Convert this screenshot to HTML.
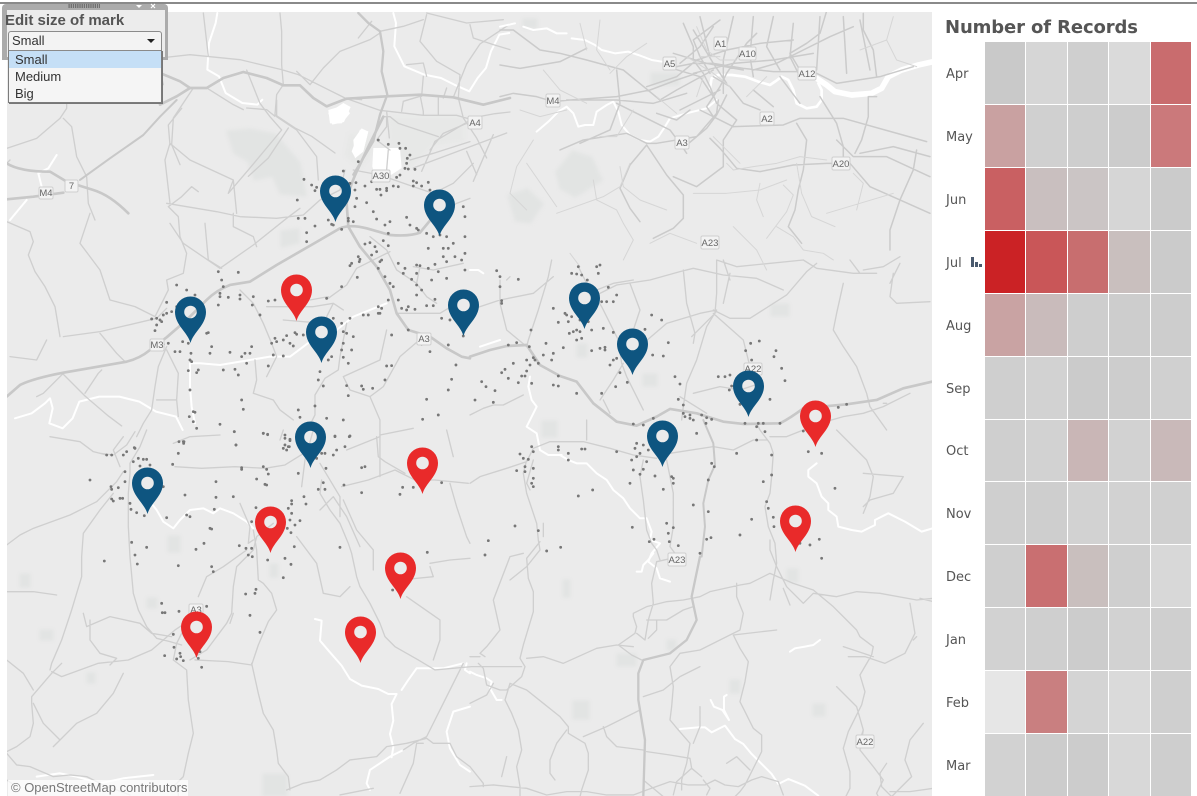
<!DOCTYPE html>
<html><head><meta charset="utf-8"><title>Number of Records</title>
<style>
html,body{margin:0;padding:0;background:#fff;width:1197px;height:796px;overflow:hidden}
#top{position:absolute;left:0;top:2px;width:1197px;height:2px;background:#8a8a8a}
#map{position:absolute;left:7px;top:12px;width:925px;height:784px;overflow:hidden;background:#ebebeb}
#map svg{position:absolute;left:-7px;top:-12px;filter:blur(.35px)}
.sh{fill:#f3f3f3;stroke:#cfcfcf;stroke-width:1}
.st{font:9.5px "Liberation Sans",sans-serif;fill:#666;text-anchor:middle}
#credit{position:absolute;left:8px;top:780px;width:180px;height:16px;background:rgba(255,255,255,.72);color:#777;font:13px/16px "Liberation Sans",sans-serif;padding-left:3px;box-sizing:border-box;white-space:nowrap}
#panel{position:absolute;left:2px;top:4px;width:166px;height:56px;background:#ababab;border-radius:4px 4px 0 0;box-sizing:border-box}
#inner{position:absolute;left:7px;top:10px;width:158px;height:47px;background:#ececec}
#title{position:absolute;left:5px;top:12px;font:bold 15px/17px "Liberation Sans",sans-serif;color:#555;white-space:nowrap}
#grip{position:absolute;left:68px;top:4px;width:32px;height:4px;background-image:radial-gradient(#333 45%,transparent 50%);background-size:2.2px 2px}
#sel{position:absolute;left:8px;top:31px;width:154px;height:20px;box-sizing:border-box;background:#f3f3f3;border:1px solid #8b8b8b;border-radius:3px 3px 0 0;font:13px/18px "Liberation Sans",sans-serif;color:#333;padding-left:3px}
#arr{position:absolute;left:147px;top:39px;width:0;height:0;border-left:4px solid transparent;border-right:4px solid transparent;border-top:4px solid #222}
#drop{position:absolute;left:8px;top:50px;width:154px;height:53px;box-sizing:border-box;background:#f5f5f5;border:1px solid #7c7c7c;border-top:1px solid #8a8a8a;box-shadow:1px 1px 0 #777;font:13px/17px "Liberation Sans",sans-serif;color:#333}
#drop div{height:17px;padding-left:6px}
#drop .on{background:#c5dff6}
h1{position:absolute;left:945px;top:17px;margin:0;font:bold 18px/22px "DejaVu Sans",sans-serif;letter-spacing:-.12px;color:#555;white-space:nowrap}
.m{position:absolute;left:946px;font:13px/16px "DejaVu Sans",sans-serif;color:#555}
</style></head><body>
<div id="top"></div>
<div id="map">
<svg width="1197" height="796" viewBox="0 0 1197 796" fill="none" stroke-linecap="round" stroke-linejoin="round">
<!-- green patches -->
<g fill="#e2e4e3" stroke="#e2e4e3" stroke-width="3" style="filter:blur(1.5px)">
<path d="M228 132l22-2 25 5 24 28 6 32-24-2-8-18-18 4-6-18-14-8zM282 232l16-2 0 12-16 4zM557 172l16-20 18 6 10 22-26 16-14-8zM509 196l18-6 15 14-12 18-14-2zM652 74l26 0 0 10-26 0zM524 20l12 0 0 7-12 0zM543 422l13 0 0 14-13 0zM578 345l8 0 0 11-8 0zM644 375l12 0 0 10-12 0zM772 305l16 0 0 10-16 0zM731 681l8 0 0 11-8 0zM814 705l10 0 0 10-10 0zM574 702l14 0 0 16-14 0zM564 581l5 0 0 15-5 0zM618 655l17 0 0 10-17 0zM668 641l7 0 0 8-7 0zM788 570l9 0 0 11-9 0zM264 775l22 0 0 20-22 0zM271 565l6 0 0 11-6 0zM169 537l10 0 0 14-10 0zM21 575l8 0 0 11-8 0zM41 631l11 0 0 8-11 0zM88 674l6 0 0 8-6 0zM148 599l8 0 0 8-8 0z"/>
<path fill="#e7e8e7" stroke="#e7e8e7" d="M390 118l73 0 0 22-30 4-22 22-20-12zM350 135l16 0 4 18-10 14-14-12z"/>
</g>
<!-- region top left -->
<g transform="translate(160 8) scale(.3333)">
<path fill="#fff" d="M505 315l45-30 22 12-20 45-35 8zM575 430l25-65 25 5-15 60-25 18zM640 420l80 0 5 60-30 20-50 5-8-30z"/>
<g stroke="#fff" stroke-width="6"><path d="M172 15l-5 30-20 60-5 80 35 20 20 50 50 30 45 5 15-15M700 15l8 30-5 70 30 60 60 25 50 10 40 20 45 20 25-40 25-30 15-50 25-50 30-5"/></g>
<g stroke="#cfcfcf" stroke-width="4"><path d="M0 150l90-10 150 15 125 30 50 15 140 70 50 5M370 230l-5-60 0-100-5-55M130 15l15 130M345 320l5-60 20-30M345 320l60 40 50 25 70 50M385 360l-60 90-60 55M100 240l-60 90-5 80 25 60M540 130l-50 50-40 50-40-40M540 130l90-35 30-20M595 90l40-50M660 70l70-15 60-20M780 100l50 60 70 40-5 70 15 60 40 60 30 60M880 268l40-100 40-60 60-40 30-20M800 20l-20 80M800 15l120 30 110-10M930 50l10 40 60 20 50 15M780 260l10 50 0 10M560 272l100 35 130 15 100 0 35 10 80-15 45-5M730 280l-5 30M730 280l50-15M835 270l0 50M860 240l-10 30M680 310l8 80M790 205l-5 60M740 170l50-5 10 40M0 190l10 40M260 300l60 5 25 20M140 240l80 50 30 15M925 340l-100 60-40 90M1040 375l-200 75-80 30M920 430l30 70M1000 380l-60 140"/></g>
</g>
<!-- region 7 -->
<g transform="translate(0 100) scale(.3333)">
<path fill="#fff" d="M985 30l50-15 15 25-25 30-35 0zM1060 120l25-35 20 10-15 60-25 20z"/>
<g stroke="#fff" stroke-width="6"><path d="M170 165l-25 40-30 15 10 40M80 300l-50 60M45 955l50-15 40-30 15-15 8 30-10 45 40 15 30-30 20-50 60-15 60 0 60 15 50 30 60 15 20 40M570 790l30 0 60 5 60-10 90-15 60 0 40-30 20-15 30 0M570 790l0 70 5 60 10 50M1010 690l50-40 50-20 50-20"/></g>
<g stroke="#cfcfcf" stroke-width="4"><path d="M20 145l90-30 70-60 20-30 0-30M190 55l25 25 15 90 30 60 5 80 20 50M20 190l10-10M270 340l-30 90 60 80 30 90 75 20 60 30 40-80-5-30 50-20 10-60-20-50-5-60-30-30 40-30 30-30 20 15M500 310l150 25 70 15 110 5 80-10 50-45 60-30 15-60M510 310l-15-130 15-50 60 50 130 60-15 40 60-70 100-120 -35-40-30-40-40-100M510 135l-5-60 40-50M830 50l0 -50M830 50l60 40 60 80 5 70M700 240l10 100M615 370l10 110 40 25M700 340l0 40 60 30 10 30M510 370l40 60 110 75 100-70 100-80 40-30M20 365l70 30 10 30-15 40 20 50 30 45 30 60 15 90M190 710l110-15 170-40 30-30M300 700l50 60 25 25M140 720l-30 60-80-10M185 818l70 70 70 60 40 30M190 820l-60 60-20 10M255 880l40-60 10-10M500 740l-25 60-10 60 -10 70-25 40-20 40M500 750l35 70-5 80 5 50M470 900l60 0M720 570l40 40 30 60 25 60 15 40 -30 60M765 780l5 60-10 40 60 20 20 30 40 30M1030 630l-30-20-30 60-120-10M930 600l55-10M985 595l55-40 30-50 100-50M1040 670l-20 100-5 40-40 25-30 50 0 60-20 40M1000 610l-60 10-60 0-80 0M1160 690l-20 90-110 50 20 40 60 20 30 70 0 70 0 100M1270 710l-70 60-50 90-40 30M1060 210l80 15 100 35 60 20 60-30 60-60M1150 50l20 0 25 20 120 40M1160 50l0 30-30 40 40 30M1165 150l-5 60M1230 180l70-20 110-35M1290 150l40-50 70-30M1300 350l70-40 40-15M1240 500l60 10 90-20M1190 640l130 0 50-30M1110 410l50 40 30 60 60 40M1260 500l-10 50 30 40 30 20"/>
</g>
</g>
<!-- region 9 -->
<g transform="translate(0 430) scale(.3333)">
<g stroke="#fff" stroke-width="6"><path d="M450 215l20 25 20 35 30 20 20-25 30-30 40-5 30 15 20-15 40 15 40 25 20 20M945 567l20 5 -5 60 30 35 35 40 25 40 35 20 50 10 30 15 25 0 -15 30 5 50 -10 40 10 40 -5 30M1210 960l-40 20-30 20-30 20-10 40 10 20M1205 780l20-30 25-35 80 0 60-15M1400 700l-5 20 15 10M1410 830l-50 15-20 60 10 50 30 50 30 20M110 1040l70-10 50 10 70 20 70-15 90-10"/></g>
<g stroke="#cfcfcf" stroke-width="4"><path d="M20 345l40-30 40-20 110-40 80-40 60-60 20-30M340 190l-40 50-50 70-5 70 0 60-30 100-30 90-30 70-5 20M155 725l30 15 110-40 90-10 70-30 70-60 30-20M545 610l-15 30-10 50 40 30 5 90 15 100-15 60-15 70-30 30 15 20 0 60-10 60M595 500l25-60 50-30 70-50M760 360l-50 50-10 60-5 80-15 30-60 80-50 30M700 550l-10 30M585 690l100 5 70 10 20-60 30-70 25-35-15-50-25-30-15-10-5-90-10-60M755 700l20 90 15 60 30 50 10 60 5 40 30 40 5 40M760 360l10-40 50-40M760 330l-15 10 5-50 -30-70M940 0l-25 90-10 80M965 150l-5 40 30 50 30 40 25 60 10 30 15 70 10 30 30 50 30 60 15 40 30 30 70 40 50 30 110-10 150 0M1390 700l-60 120-50 100-40 20-30 20M860 1080l50-20 50-10 50-30 40-30 80-10 30-30 60-10 60-15 20 15 50 0 20 40 40 30 40 50 0 10M1270 940l-20 0-10 60 -40 90M1020 1095l100-20M520 40l50-20 90-5M390 100l0 30-5 60 0 100 5 90 10 110 15 50 25 50 30 35 40 10 35 10M360 110l-20-50 30-40M440 0l-20 50-30 50M300 70l40 5 40-30 25-40M150 20l90 15 40 30 40 10M525 110l80 5 100-5 90 5 60-10 40-25 40-25 40-40M960 100l60 100 0 60M1025 170l80-20 80-30 60 30 60 0 100 10M1130 20l5 60 20 15 60 35M840 30l10-30M1140 15l100-20M1040 60l100-40M20 1050l30 20M20 965l30-15 40-30 10-40 -5-60 0-20 60-70 30-30M20 970l30 35 40 5 70 30 50-5 50 5 60 30 30 10 40 15M100 820l30 60 50 50-20 20M180 930l50-50 60-30 50-60 30-60M250 550l10 40 70-30 90 20 35 30 60 10M270 570l0 60 30 40 50 15 -20 20M20 690l50 40 30 50M20 485l80 0 70 10M960 240l40-40 40 60 40 90M1030 210l40 90 50 60 0 60M890 320l60 80 20 90 50 10 30-30M1290 400l60-10 60-5M1200 450l100-10 -10-30M1220 500l100 70 0 60-20 60M1340 0l20 80M1350 160l20 70 30 90 10 20"/>
</g>
</g>
<!-- region 8 -->
<g transform="translate(470 260) scale(.3333)">
<g stroke="#fff" stroke-width="6"><path d="M0 30l25 0 15 10M30 260l30-10 30-10M180 350l-5 30 10 40 15 20-15 30 -15 30 30 20 10 50 25 15 40 0M270 585l25 15 25 10 30 0 30 30 30 20 20 30 30 25 20 30 30 30 20 0 15 40 -5 25 30 10-25 30-10 25 25 20 10 30 30 10M1040 610l-25 20 0 20 25 20 15 40 20 20 0 20 25 20 5 30 40 10 30 5 40-20 0-15 40-20 50 25 50 30 50-15 30 0 5-30"/></g>
<g stroke="#cfcfcf" stroke-width="4"><path d="M245 0l-10 50-30 100-30 90-5 20M90 60l0 70 20 80 60 50M0 150l90-30 100-20 60-50M0 465l40-20 30-10 30 0 60-30M0 670l30-20 80-25 60-20 20-40 50-20 100 0 80 20 70 20 70 10M170 600l-10 40 10 60 30 90 5 50 5 30 -40 50-50 40M190 600l-20 70 10 20M520 450l-50-100-15-40-10-70-50-100-40-60-30-60M520 600l-10 50 10 70 10 90 15 40 15 20 10 30M590 600l20 100 0 100-10 60 30 40M460 310l-30 50-40 60M520 250l70-60 100-30 50-10 -30 50-30 100-30 70-10 70-5 40M640 30l10 100 25 90 -5 30M740 0l0 100-5 60 -70 70M730 160l90 80 20 80M730 150l50 25 60 0 110-70 60-70 30-25M740 0l60 20 200-20 40 25 110 15 70 0M630 35l-90 25-100 15-60 30-20 0M630 35l40-10 90 20 100 10 80 35M380 90l50-20 60-10M780 60l-20-60M480 70l30 80 -20 60M760 130l20-90M860 490l10 20 30 40 10 30 -5 70 -5 50-15 40 10 60 20 50 5 60 -10 50 -10 60M600 580l130-20 60 10 60-30 40 0M900 530l50 0 50-20 50-20 70-20 60-10 60-20 80-40M1250 430l-10 0M1120 70l-20 90-10 50 30 50 40 60 30 80 10 40 50 70M1140 0l30 40M1270 40l-10 70 20 20 100-5M1180 30l60-10 50-30M1290 10l-30 60M630 410l80 50M670 400l80-20 60 10 60-20M400 420l20 40M1100 510l90 90 20 50 -10 60 -20 50M1180 640l120 10 -30 50 -70 20 -20 20M350 540l0-60 0 40M220 790l0 40M120 50l-10 10"/></g>
</g>
<!-- region 10 -->
<g transform="translate(470 540) scale(.3333)">
<g stroke="#fff" stroke-width="6"><path d="M500 95l15 0 5-20 15-15 15-20M960 335l15-10 30-5 25-5 20-15M722 480l10 20 25 10 20 30-15-30 0-40 8-5M630 567l55-5 20 0 20 15 40-20 30 40 25 15 25 30 30 30 30 30 20 30 30-15 50 20 40 30 10 30 60-15M0 395l20 10 30 10 15 10 -5 20 20 35 15 0"/></g>
<g stroke="#cfcfcf" stroke-width="4"><path d="M210 5l-40 50 5 60 15 40 0 60-30 100-10 40 15 25-10 30-45 40-20 0-40-15-10-50-15-15M170 355l50-5 60 20 100-45 60-10 50 5M445 315l50-35 5-20-10-30 0-10 40-20 60-15 50-5 50-10 30-15 90-20 30-5 60-30 70 30 60 20 60 50 40 40 30 30 10 20 40 30-5 25-35 60 15 50-10 40-40 80-15 50 20 70 0 50-25 50-10 30M500 280l25 20 10-60 15-50-5-60 15-65 45-10M530 240l30 0 0 30-25 25M560 240l30 0 50-30 30-10M445 315l40 30 30 15M1000 190l30-30 70 10 60-15 70 5 110 20 50-5M1000 190l-50-50-30-60-20-50 0-30M940 145l20 50M120 430l50 20 50 40 50 40 25 30 0 20 50 30 10 30 0 50-20 60-10 40-5 30M120 430l-15 50 20 40 20 50 10 60-15 50 10 60 0 30M0 490l50-25 20-35M45 350l-15-10 20-20 40-50-20-90 50-130 40-10M0 350l30 0M0 740l70-5 100 10 60 20 60-10 60 0 60 10 80 0 40-15 70-25 55 10 50 0 30-15 30 15 40 5 40-20 30-10 50 15 15 40M700 720l20 25-10 20M520 720l60 50M660 655l-60-10-70-10M660 655l5 30 30 25M665 685l-45 40-10 40M800 130l0 40 20 50 -10 50 -120 60 -60 10 -30 40 10 60 -5 60 -5 40 25 30 35 40 -10 60 -15 50 0 30M920 270l-130 15 20 40 25 40 -10 60 -15 60 20 40 20 40 25 20 0 50-30 60 -20 40 -15 20-30 30-20 60M690 380l-60 30-50 40-60 20M1100 440l60 60 20 70-10 60 40 50 30 40-20 40 15 30 20 10M1180 570l-10 30M1360 550l-40 50-15 60 20 50-30 30-30 30-30-30-5-40 20-30M1390 745l-70 10-60 0M1390 185l-40-10M1320 190l15 90-30 60-60 30-60-20-50 0M1120 320l90 30M1340 290l-10 10M400 560l10 30 30 30 80 10M510 510l-100 50-70 30M290 570l-30 40-20 50 0 40 15 20M110 650l-15 60M690 500l0 60-20 50M770 670l30-20 40 40"/></g>
</g>
<!-- region 6 -->
<g transform="translate(500 10) scale(.3333)">
<g stroke="#fff" stroke-width="6"><path d="M0 50l45-10M70 50l30 10 40-5 30 15 30 0M215 85l40 5 30 15 20 15 40 10 40-5 30 10 40 15 30 5"/><path d="M110 365l35-30 30-30 25-15 20 20 15 40 20-5 25 0 10-40 30-20 20-10 15 30 10 40 25 30 30 15 30 5 25-15 20-30 15-25 50-15 60-15 30-25"/><path stroke-width="8" d="M630 235l5-30 20-10 40 0 40 5 40 15 35 10 15-10 20-15 20 10 15 30 10 40 30 15 30-5 15-20 0-30-10-20"/><path stroke-width="17" d="M950 205l30 20 25 20 50 10 60-5 30-15 20-35 40-20 50-15 45-10"/></g>
<g stroke="#cbcbcb" stroke-width="4.5"><path d="M0 60l40 0 80 60 60 10 80 20 110 30M0 165l60 10 120-20 80-40M370 180l110 90 50-30 110-60M530 170l50-10 60 0 90 15 90 10 80 0M0 260l40-10 70 10 50 15 50-5 140-10 100-20 80-30 60-20M200 270l150 0 110 10 100-30M350 180l10 100 -30 80-90 40M350 280l120 60 40 20 30 40 20 30M180 420l70-30 130-20 60 30 30 0 120-20 60-70 5-40M440 405l-50 60-30 70 30 60 30 40M440 405l60 90 50 60 0 70-30 30 -60 30M520 500l70 30 80-60 0-80 40-60-60-50-20-50-20-40 -30-40 0-40-30-70M660 30l-80 60 20 50 30 50M700 350l-60-30-20-30 40-60 20-40 60-90 30-30M680 255l-30 60-30 40-60 50M700 350l150 -5 50-20 130 0 250 70 M890 340l30 50 -10 90 -15 60-10 60-20 50 40 50M1240 170l-100 30 -130 20-60-30-50-10 -30-50 50-30 40-30 30-100M760 180l70-20 80-40 80-40 70-30M1130 200l-10-80-30-60 0-50M960 260l50 80 20 70 0 50 -20 0 -30 0 -100 5-100 20-70-10-50-60-30-30M1010 390l50 50 100 0 130 60M1080 430l100-20 110 30M1050 460l60 70 90 40 90 40M1200 570l-30 90 0 60M1200 570l40-90 10-60M1130 260l-25 0 0 60 -20 70 -20 40M500 170l100 30 40 60M540 160l60-50 40-60M580 60l60 100 40 60M600 20l30 120M700 20l-30 130 0 100M760 20l-10 120 10 60M820 20l-20 90 40 70M880 40l-10 100 30 60M960 20l-10 160M1030 20l10 170M1080 30l30 150M580 190l120 -30 120 -10 120 -20M440 230l90-30 60-50 90-30 100-20 100-10M520 130l100 30 110 20M640 200l50 30 40 50 50 20M660 240l-60 30-60 30M600 300l60 30M760 240l60 50M840 200l60 80M470 310l60 20 40-30"/></g>
<g stroke="#d6d6d6" stroke-width="3"><path d="M600 140l60 0M590 50l30 70 40 30 50 0M560 140l80 50 50 40M610 200l-20 60M470 260l60 50M440 100l-60 40-50 50M800 200l-60 60M100 390l-50 80 -20 80 50 50M300 380l50 0 50-80M80 460l90 130M170 610l140-50 50-30 30-70M280 510l10 60 60 30 20 40 30 50 -30 60M360 470l10 60 50 40 80 30M580 550l100 0 100-10 80-30M680 460l20 20 60-10 70-10 70-20 80 10M780 520l-10 50 20 50M850 525l30 30 -20 50 -60 80M890 460l15 90 30 70 70 30M980 610l100-30 100-30M1060 490l30 30 -20 80M700 650l70 70 30 60M450 700l60-30 80 30M830 650l50 30 30 40 60 10 30 20M210 730l30 40M640 380l50 50 30 30M1180 20l-20 70 30 60 60 20M1160 90l-80 30M240 40l20 80M300 30l-10 90 40 60M130 180l50 60 80 40M60 300l60 20 80-20"/></g>
</g>
<!-- major roads -->
<g stroke="#c8c8c8" stroke-width="2.4">
<g transform="translate(160 8) scale(.3333)" stroke-width="8"><path d="M0 195l60 25 30 20 50 0 50-30 60-18 70 18 50 22 50 0 40 38 40 25 60-23 120-7 100-5 100 8 90 22 80-20M0 290l50-25 40-25"/><path stroke-width="7" d="M595 15l30 30 35 25 10 60-5 60 17 70-22 60-20 80-30 50-30 50"/></g>
<g transform="translate(0 100) scale(.3333)" stroke-width="8"><path d="M20 890l40-35q40-20 130-37l190-33q40-10 70-35l50-38 60-52 60-60q30-30 70-45l60-10 80-50 130-75 60-35q30-13 80 0l70 20q60 5 90-7l40-48"/><path d="M20 298l80-8 90-12M20 190q40 25 130 25l50 30 80 25q50 15 105 70"/><path stroke-width="6" d="M240 240l90-65 100-70 50-55 50-50"/><path d="M1040 310l5 70 35 60 50 60 40 70 20 70 35 50 65 20 50 35 45 25 25 5M1040 310q5-40 30-95l40-85 40-80"/></g>
<g transform="translate(470 260) scale(.3333)" stroke-width="8"><path d="M0 290l60-20 50-12 60-3 40 60 60 33 50 17 50 65 70 55 60 12 60-27 40-23 80 13 80 25 60 7 110-2q30-15 70-45l130-12 90-13 80-35 86-20"/><path stroke-width="6" d="M700 480l30 70 5 65-20 45-15 70 5 70-10 90"/></g>
<g transform="translate(470 540) scale(.3333)" stroke-width="7"><path d="M690 50l-25 120 15 70-30 60-50 40-80 20-15 40 0 80 20 120-5 168"/></g>
</g>
<!-- dots -->
<g stroke="#777">
<g transform="translate(0 100) scale(.3333)" stroke-width="8.5"><path d="M1135 120h0M1165 133h0M1197 130h0M1200 145h0M1217 145h0M1230 165h0M1222 175h0M1220 190h0M1215 205h0M1225 207h0M1245 208h0M1200 225h0M1190 232h0M1240 243h0M1250 248h0M1285 247h0M1265 258h0M1240 258h0M1290 270h0M1195 260h0M1180 258h0M1160 265h0M1160 272h0M1130 268h0M1140 268h0M1143 285h0M1120 232h0M1125 240h0M1115 245h0M1075 185h0M1030 213h0M912 238h0M935 255h0M950 262h0M945 272h0M892 300h0M1068 248h0M1050 250h0M1095 258h0M1065 270h0M1070 295h0M1100 308h0M1120 335h0M1065 320h0M1045 355h0M1045 363h0M1060 365h0M1130 357h0M1155 375h0M1170 365h0M1165 400h0M1230 375h0M1250 385h0M1255 390h0M1220 352h0M1280 400h0M1300 410h0M1320 405h0M1340 410h0M1395 350h0M1390 320h0M1025 388h0M1000 375h0M995 373h0M985 360h0M945 378h0M915 355h0M895 355h0M920 398h0M920 425h0M1095 432h0M1110 428h0M1125 440h0M1150 422h0M1165 437h0M1130 455h0M1115 465h0M1140 485h0M1145 480h0M1075 470h0M1080 478h0M1078 485h0M1055 490h0M1050 497h0M1135 505h0M1155 530h0M1170 550h0M1180 560h0M1195 490h0M1215 505h0M1210 520h0M1250 495h0M1260 497h0M1285 505h0M1305 493h0M1315 515h0M1340 485h0M1365 470h0M1385 480h0M1395 510h0M1345 445h0M1360 430h0M1395 410h0M1395 460h0M1330 445h0M1285 445h0M1330 470h0M1250 520h0M1235 538h0M1250 555h0M1295 540h0M1340 535h0M1265 570h0M1250 585h0M1225 620h0M1205 625h0M1220 630h0M1165 600h0M1135 620h0M1145 625h0M1135 640h0M1140 640h0M1195 600h0M1245 628h0M1280 617h0M1300 617h0M1305 598h0M1325 655h0M1350 660h0M1225 690h0M1265 733h0M1290 755h0M1345 735h0M1390 708h0M1175 705h0M1105 645h0M1090 645h0M1050 655h0M1025 670h0M1000 655h0M1030 695h0M1040 700h0M1060 710h0M1030 730h0M1025 750h0M1055 750h0M1030 772h0M1045 790h0M995 770h0M985 780h0M960 815h0M955 840h0M970 858h0M1040 857h0M1085 858h0M1090 868h0M1118 865h0M1045 887h0M1155 840h0M1175 797h0M1160 798h0M1280 898h0M1315 945h0M1268 958h0M1368 795h0M1355 838h0M1345 870h0M945 918h0M900 952h0M895 930h0M1030 960h0M980 955h0M1005 1010h0M1050 1008h0M790 1000h0M803 1003h0M703 995h0M708 1035h0M855 1015h0M870 1022h0M855 1035h0M865 1040h0M730 928h0M725 900h0M660 973h0M590 985h0M580 965h0M568 950h0M580 935h0M585 937h0M552 1025h0M403 1043h0M570 870h0M595 810h0M590 818h0M565 812h0M570 780h0M573 760h0M575 785h0M565 730h0M540 755h0M525 755h0M505 730h0M490 733h0M548 725h0M555 690h0M625 698h0M620 700h0M635 740h0M630 760h0M690 757h0M725 770h0M735 760h0M740 790h0M750 760h0M755 740h0M705 808h0M715 825h0M670 810h0M805 798h0M825 715h0M830 725h0M815 730h0M820 765h0M850 768h0M860 707h0M885 698h0M890 703h0M870 730h0M880 738h0M910 705h0M850 720h0M665 540h0M670 560h0M655 515h0M715 517h0M660 580h0M660 590h0M685 592h0M720 585h0M720 597h0M760 590h0M757 615h0M655 615h0M805 603h0M825 600h0M780 645h0M530 555h0M560 570h0M585 585h0M530 620h0M500 607h0M515 635h0M500 640h0M490 645h0M470 655h0M455 657h0M485 665h0M470 675h0M465 692h0M480 660h0M980 595h0M925 595h0M1025 560h0M1072 532h0"/></g>
<g transform="translate(470 260) scale(.3333)" stroke-width="8.5"><path d="M80 32h0M90 50h0M90 80h0M145 58h0M95 122h0M95 130h0M305 40h0M320 42h0M335 45h0M325 20h0M380 20h0M390 15h0M385 40h0M352 60h0M415 82h0M440 105h0M430 125h0M395 125h0M410 125h0M250 145h0M285 160h0M290 165h0M305 170h0M265 187h0M295 185h0M330 180h0M355 185h0M320 210h0M310 215h0M298 220h0M330 215h0M365 210h0M335 235h0M320 240h0M400 205h0M430 217h0M228 250h0M183 210h0M178 260h0M115 255h0M140 248h0M280 263h0M365 272h0M390 265h0M405 262h0M405 270h0M250 280h0M245 300h0M220 285h0M190 293h0M195 300h0M170 300h0M205 310h0M180 315h0M170 333h0M155 348h0M165 348h0M130 310h0M105 328h0M95 338h0M115 355h0M145 368h0M185 370h0M35 365h0M48 380h0M75 392h0M15 420h0M70 427h0M265 348h0M250 375h0M265 378h0M320 400h0M395 400h0M430 300h0M420 315h0M440 295h0M450 338h0M472 367h0M437 380h0M545 165h0M575 180h0M525 208h0M595 248h0M548 285h0M580 288h0M615 350h0M630 372h0M625 418h0M640 435h0M640 460h0M660 465h0M660 475h0M670 480h0M645 470h0M695 465h0M710 473h0M725 478h0M708 490h0M680 520h0M490 492h0M520 495h0M550 475h0M585 568h0M500 550h0M495 565h0M520 555h0M535 570h0M510 580h0M500 590h0M530 605h0M485 600h0M490 630h0M520 628h0M510 643h0M555 648h0M605 650h0M610 655h0M610 670h0M580 688h0M480 670h0M440 575h0M345 567h0M335 567h0M295 580h0M295 600h0M265 560h0M265 570h0M185 560h0M190 575h0M150 582h0M160 595h0M175 598h0M165 620h0M165 635h0M190 625h0M190 655h0M185 670h0M140 632h0M190 680h0M325 708h0M368 690h0M135 798h0M205 812h0M55 842h0M45 885h0M230 873h0M272 862h0M487 802h0M590 790h0M610 803h0M595 820h0M598 845h0M625 857h0M552 838h0M538 845h0M670 735h0M715 755h0M710 838h0M723 833h0M690 880h0M725 610h0M733 620h0M715 660h0M745 350h0M765 350h0M780 345h0M785 378h0M778 390h0M810 433h0M825 490h0M865 490h0M860 500h0M885 515h0M860 540h0M800 580h0M905 585h0M905 645h0M880 665h0M890 725h0M895 745h0M910 772h0M912 800h0M845 778h0M810 825h0M930 490h0M1000 513h0M1015 575h0M1055 580h0M1095 685h0M880 490h0M900 418h0M945 362h0M935 325h0M912 290h0M918 272h0M868 243h0M842 250h0M827 272h0M845 300h0M990 850h0M1020 855h0M1048 838h0M1055 895h0M1105 442h0M1130 433h0"/></g>
<g transform="translate(0 430) scale(.3333)" stroke-width="8.5"><path d="M320 75h0M335 75h0M370 75h0M380 65h0M405 55h0M415 85h0M430 88h0M440 88h0M400 95h0M420 108h0M450 105h0M375 125h0M375 155h0M355 173h0M333 170h0M335 178h0M335 207h0M340 213h0M360 205h0M368 205h0M270 150h0M390 220h0M393 238h0M410 248h0M433 257h0M500 263h0M490 170h0M555 195h0M648 155h0M648 202h0M700 200h0M643 238h0M560 255h0M570 260h0M630 295h0M635 297h0M612 340h0M588 358h0M440 352h0M395 337h0M405 375h0M412 402h0M313 393h0M535 407h0M635 410h0M640 425h0M718 347h0M738 355h0M755 355h0M745 375h0M757 380h0M803 390h0M855 385h0M873 403h0M850 443h0M883 350h0M873 308h0M862 295h0M885 285h0M900 272h0M870 270h0M875 250h0M865 235h0M875 212h0M875 222h0M918 222h0M912 200h0M895 130h0M805 132h0M795 163h0M800 165h0M770 147h0M768 233h0M755 275h0M725 113h0M725 118h0M800 118h0M790 110h0M535 70h0M518 103h0M537 35h0M550 35h0M551 40h0M485 520h0M495 548h0M487 548h0M537 544h0M620 529h0M520 613h0M522 652h0M540 670h0M542 680h0M530 687h0M550 692h0M494 677h0M595 685h0M605 712h0M600 665h0M768 478h0M765 490h0M737 492h0M750 556h0M780 607h0M1020 352h0M975 178h0M955 178h0M970 158h0M1032 165h0M1085 188h0M1085 113h0M1095 110h0M978 115h0M1010 60h0M1000 75h0M1035 50h0M1048 20h0M1005 18h0M965 70h0M950 85h0M975 70h0M855 15h0M870 28h0M850 55h0M860 60h0M868 50h0M703 5h0M708 45h0M790 10h0M803 14h0M1325 158h0M1240 172h0M1208 172h0M1200 193h0M1282 367h0M1178 480h0M1180 460h0M1105 650h0"/></g>
</g>
<!-- shields -->
<g>
<rect class="sh" x="714" y="37" width="13" height="13" rx="1.5"/><text class="st" x="720.5" y="47">A1</text>
<rect class="sh" x="739" y="47" width="17" height="13" rx="1.5"/><text class="st" x="747.5" y="57">A10</text>
<rect class="sh" x="663" y="57" width="13" height="13" rx="1.5"/><text class="st" x="669.5" y="67">A5</text>
<rect class="sh" x="798" y="67" width="18" height="13" rx="1.5"/><text class="st" x="807" y="77">A12</text>
<rect class="sh" x="546" y="94" width="14" height="13" rx="1.5"/><text class="st" x="553" y="104">M4</text>
<rect class="sh" x="468" y="116" width="14" height="13" rx="1.5"/><text class="st" x="475" y="126">A4</text>
<rect class="sh" x="760" y="112" width="14" height="13" rx="1.5"/><text class="st" x="767" y="122">A2</text>
<rect class="sh" x="675" y="136" width="14" height="13" rx="1.5"/><text class="st" x="682" y="146">A3</text>
<rect class="sh" x="832" y="157" width="18" height="13" rx="1.5"/><text class="st" x="841" y="167">A20</text>
<rect class="sh" x="701" y="236" width="18" height="13" rx="1.5"/><text class="st" x="710" y="246">A23</text>
<rect class="sh" x="39" y="187" width="14" height="12" rx="1.5"/><text class="st" x="46" y="196">M4</text>
<rect class="sh" x="65" y="180" width="13" height="12" rx="1.5"/><text class="st" x="71.5" y="189">7</text>
<rect class="sh" x="372" y="170" width="18" height="12" rx="1.5"/><text class="st" x="381" y="179">A30</text>
<rect class="sh" x="417" y="333" width="14" height="12" rx="1.5"/><text class="st" x="424" y="342">A3</text>
<rect class="sh" x="150" y="339" width="14" height="12" rx="1.5"/><text class="st" x="157" y="348">M3</text>
<rect class="sh" x="744" y="363" width="18" height="12" rx="1.5"/><text class="st" x="753" y="372">A22</text>
<rect class="sh" x="668" y="553" width="18" height="13" rx="1.5"/><text class="st" x="677" y="563">A23</text>
<rect class="sh" x="189" y="604" width="14" height="12" rx="1.5"/><text class="st" x="196" y="613">A3</text>
<rect class="sh" x="856" y="735" width="18" height="13" rx="1.5"/><text class="st" x="865" y="745">A22</text>
</g>
<!-- pins -->
<defs><path id="p" fill-rule="evenodd" stroke="none" d="M0 0C-3-11-15.5-18-15.5-31A15.5 15.5 0 1 1 15.5-31C15.5-18 3-11 0 0ZM-6.3-31A6.3 6.3 0 1 0 6.3-31A6.3 6.3 0 1 0-6.3-31Z"/></defs>
<g fill="#0e5580">
<use href="#p" x="335.5" y="222"/><use href="#p" x="439.5" y="236"/><use href="#p" x="190.5" y="343"/><use href="#p" x="321.5" y="363"/><use href="#p" x="463.5" y="336"/><use href="#p" x="584.5" y="329"/><use href="#p" x="632.5" y="375"/><use href="#p" x="748.5" y="417"/><use href="#p" x="662.5" y="467"/><use href="#p" x="310.5" y="468"/><use href="#p" x="147.5" y="514"/>
</g>
<g fill="#e92a2a">
<use href="#p" x="296.5" y="321"/><use href="#p" x="815.5" y="447"/><use href="#p" x="422.5" y="494"/><use href="#p" x="270.5" y="553"/><use href="#p" x="795.5" y="552"/><use href="#p" x="400.5" y="599"/><use href="#p" x="196.5" y="658"/><use href="#p" x="360.5" y="663"/>
</g>
</svg>
</div>
<div id="credit">© OpenStreetMap contributors</div>
<div id="panel"></div><div id="inner"></div><div id="grip"></div>
<svg style="position:absolute;left:135px;top:3px" width="26" height="7"><path d="M1 2h6l-3 3z" fill="#fff"/><path d="M16 1l4 4M20 1l-4 4" stroke="#fff" stroke-width="1.2"/></svg>
<div id="title">Edit size of mark</div>
<div id="sel">Small</div><div id="arr"></div>
<div id="drop"><div class="on">Small</div><div>Medium</div><div>Big</div></div>
<h1>Number of Records</h1>
<div class="m" style="top:67px">Apr</div><div class="m" style="top:130px">May</div><div class="m" style="top:193px">Jun</div><div class="m" style="top:256px">Jul</div><div class="m" style="top:319px">Aug</div><div class="m" style="top:382px">Sep</div><div class="m" style="top:444px">Oct</div><div class="m" style="top:507px">Nov</div><div class="m" style="top:570px">Dec</div><div class="m" style="top:633px">Jan</div><div class="m" style="top:696px">Feb</div><div class="m" style="top:759px">Mar</div>
<svg style="position:absolute;left:971px;top:257px" width="12" height="10"><path fill="#4a5a6e" d="M0 0h3v10H0zM4 5h3v5H4zM8 7h3v3H8z"/></svg>
<svg style="position:absolute;left:0;top:0" width="1197" height="796">
<g shape-rendering="crispEdges">
<rect x="985" y="42" width="40" height="62" fill="#c9c9c9"/><rect x="1026" y="42" width="41" height="62" fill="#d6d6d6"/><rect x="1068" y="42" width="40" height="62" fill="#cfcfcf"/><rect x="1109" y="42" width="41" height="62" fill="#dadada"/><rect x="1151" y="42" width="40" height="62" fill="#c96c6e"/>
<rect x="985" y="105" width="40" height="62" fill="#c9a1a1"/><rect x="1026" y="105" width="41" height="62" fill="#d0d0d0"/><rect x="1068" y="105" width="40" height="62" fill="#cecece"/><rect x="1109" y="105" width="41" height="62" fill="#cccccc"/><rect x="1151" y="105" width="40" height="62" fill="#cb797b"/>
<rect x="985" y="168" width="40" height="62" fill="#c96062"/><rect x="1026" y="168" width="41" height="62" fill="#c9bfbf"/><rect x="1068" y="168" width="40" height="62" fill="#cbc5c5"/><rect x="1109" y="168" width="41" height="62" fill="#d6d6d6"/><rect x="1151" y="168" width="40" height="62" fill="#cbcbcb"/>
<rect x="985" y="231" width="40" height="62" fill="#cb2225"/><rect x="1026" y="231" width="41" height="62" fill="#c95658"/><rect x="1068" y="231" width="40" height="62" fill="#c86e6f"/><rect x="1109" y="231" width="41" height="62" fill="#c9bfbe"/><rect x="1151" y="231" width="40" height="62" fill="#cbcbcb"/>
<rect x="985" y="294" width="40" height="62" fill="#c9a3a3"/><rect x="1026" y="294" width="41" height="62" fill="#c9bbbb"/><rect x="1068" y="294" width="40" height="62" fill="#cecece"/><rect x="1109" y="294" width="41" height="62" fill="#cdcdcd"/><rect x="1151" y="294" width="40" height="62" fill="#cdcdcd"/>
<rect x="985" y="357" width="40" height="62" fill="#cfcfcf"/><rect x="1026" y="357" width="41" height="62" fill="#d2d2d2"/><rect x="1068" y="357" width="40" height="62" fill="#cbcbcb"/><rect x="1109" y="357" width="41" height="62" fill="#cdcdcd"/><rect x="1151" y="357" width="40" height="62" fill="#d0d0d0"/>
<rect x="985" y="420" width="40" height="61" fill="#cfcfcf"/><rect x="1026" y="420" width="41" height="61" fill="#d2d2d2"/><rect x="1068" y="420" width="40" height="61" fill="#c9b6b6"/><rect x="1109" y="420" width="41" height="61" fill="#d2d2d2"/><rect x="1151" y="420" width="40" height="61" fill="#c9b9b9"/>
<rect x="985" y="482" width="40" height="62" fill="#cfcfcf"/><rect x="1026" y="482" width="41" height="62" fill="#cecece"/><rect x="1068" y="482" width="40" height="62" fill="#d2d2d2"/><rect x="1109" y="482" width="41" height="62" fill="#d2d2d2"/><rect x="1151" y="482" width="40" height="62" fill="#d0d0d0"/>
<rect x="985" y="545" width="40" height="62" fill="#cfcfcf"/><rect x="1026" y="545" width="41" height="62" fill="#c96f71"/><rect x="1068" y="545" width="40" height="62" fill="#c9bfbe"/><rect x="1109" y="545" width="41" height="62" fill="#cfcfcf"/><rect x="1151" y="545" width="40" height="62" fill="#d8d8d8"/>
<rect x="985" y="608" width="40" height="62" fill="#d2d2d2"/><rect x="1026" y="608" width="41" height="62" fill="#cfcfcf"/><rect x="1068" y="608" width="40" height="62" fill="#cccccc"/><rect x="1109" y="608" width="41" height="62" fill="#d2d2d2"/><rect x="1151" y="608" width="40" height="62" fill="#cfcfcf"/>
<rect x="985" y="671" width="40" height="62" fill="#e6e6e6"/><rect x="1026" y="671" width="41" height="62" fill="#c97f80"/><rect x="1068" y="671" width="40" height="62" fill="#d4d4d4"/><rect x="1109" y="671" width="41" height="62" fill="#dadada"/><rect x="1151" y="671" width="40" height="62" fill="#cfcfcf"/>
<rect x="985" y="734" width="40" height="62" fill="#d2d2d2"/><rect x="1026" y="734" width="41" height="62" fill="#cccccc"/><rect x="1068" y="734" width="40" height="62" fill="#cccccc"/><rect x="1109" y="734" width="41" height="62" fill="#d8d8d8"/><rect x="1151" y="734" width="40" height="62" fill="#cecece"/>
</g></svg>
</body></html>
